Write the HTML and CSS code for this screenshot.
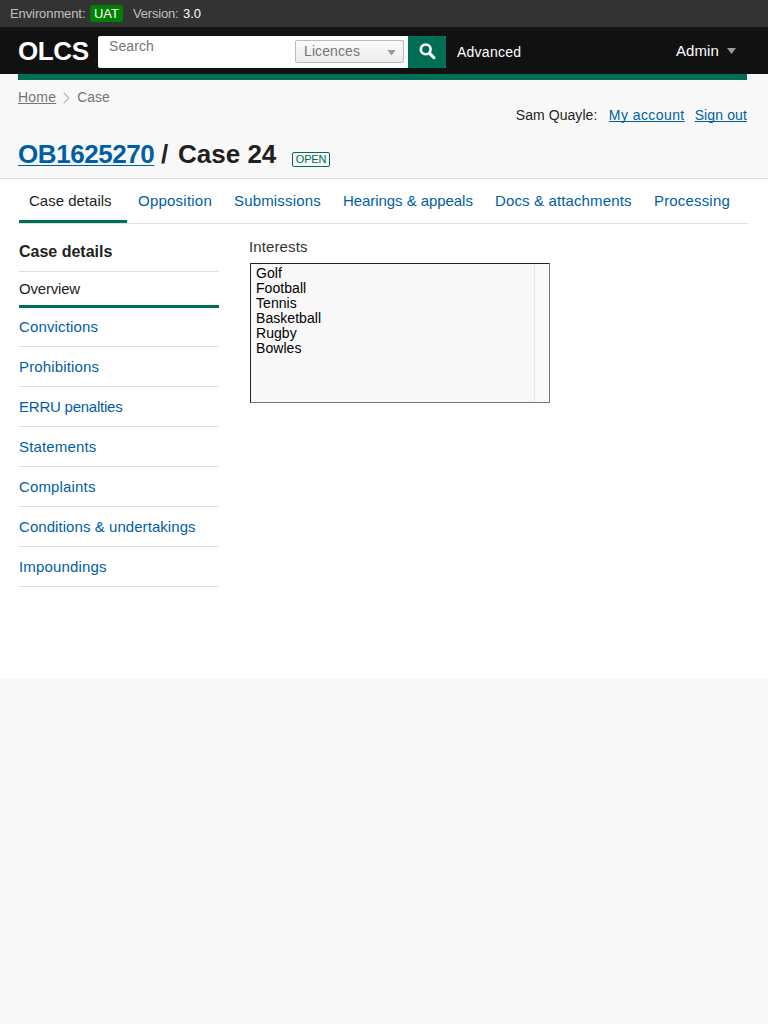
FILE: index.html
```html
<!DOCTYPE html>
<html lang="en">
<head>
<meta charset="utf-8">
<title>OLCS – Case 24</title>
<link rel="stylesheet" href="styles.css">
</head>
<body>
<div class="env"><span class="env-label">Environment:</span><span class="env-tag">UAT</span><span class="ver-label">Version:</span><span class="ver">3.0</span></div>
<header class="top">
  <span class="logo">OLCS</span>
  <form class="search">
    <span class="placeholder">Search</span>
    <span class="select"><span class="select-text">Licences</span><i class="arrow"></i></span>
    <span class="go"><svg width="17" height="17" viewBox="0 0 17 17"><circle cx="6.7" cy="6.4" r="4.9" fill="none" stroke="#fff" stroke-width="2.6"/><path d="M10.3 10.2 L14.9 14.6" stroke="#fff" stroke-width="3.1" stroke-linecap="round"/></svg></span>
  </form>
  <a class="advanced">Advanced</a>
  <span class="admin">Admin</span><i class="arrow"></i>
</header>
<div class="page-head">
  <div class="accent"></div>
  <div class="crumbs"><a class="home">Home</a><svg class="chev" width="7" height="12" viewBox="0 0 7 12"><path d="M0.7 0.7 L5.8 6 L0.7 11.3" fill="none" stroke="#b8bbbc" stroke-width="1.3"/></svg><span class="current">Case</span></div>
  <div class="account"><span class="user">Sam Quayle:</span><a class="my">My account</a><a class="out">Sign out</a></div>
  <div class="title"><h1><a class="ref">OB1625270</a><span class="slash">/</span><span class="case-no">Case 24</span></h1><span class="status"><span class="status-text">OPEN</span></span></div>
</div>
<main class="main">
  <nav class="tabs"><a class="tab active">Case details</a><a class="tab opposition">Opposition</a><a class="tab submissions">Submissions</a><a class="tab hearings">Hearings &amp; appeals</a><a class="tab docs">Docs &amp; attachments</a><a class="tab processing">Processing</a></nav>
  <div class="columns">
    <aside class="side">
      <h2>Case details</h2>
      <a class="item current-item">Overview</a>
      <a class="item first">Convictions</a>
      <a class="item">Prohibitions</a>
      <a class="item erru">ERRU penalties</a>
      <a class="item">Statements</a>
      <a class="item">Complaints</a>
      <a class="item conditions">Conditions &amp; undertakings</a>
      <a class="item">Impoundings</a>
    </aside>
    <section class="content">
      <div class="label">Interests</div>
      <div class="listbox"><div class="options"><div>Golf</div><div>Football</div><div>Tennis</div><div>Basketball</div><div>Rugby</div><div>Bowles</div></div><div class="track"></div></div>
    </section>
  </div>
</main>
</body>
</html>
```
FILE: styles.css
```css
* { box-sizing: border-box; }
body { margin: 0; background: #f8f8f8; color: #231f20; font-family: "Liberation Sans", Arial, sans-serif; font-size: 15px; line-height: 20px; white-space: nowrap; }
a { color: #005ea5; }
.env { height: 27px; background: #333; display: flex; align-items: center; padding-left: 10px; font-size: 13px; color: #bfc1c3; }
.env-label { width: 80px; letter-spacing: -0.1px; }
.env-tag { width: 33px; height: 17px; line-height: 17px; background: #008000; color: #fff; border-radius: 2px; text-align: center; margin-right: 10px; }
.ver-label { width: 50px; letter-spacing: -0.2px; }
.ver { color: #fff; }
.top { height: 47px; background: #111; display: flex; align-items: center; padding: 0 32px 0 18px; color: #fff; }
.logo { width: 80px; font-size: 26px; font-weight: bold; line-height: 30px; letter-spacing: -0.4px; }
.search { margin: 5px 11px 3px 0; width: 348px; height: 32px; display: flex; background: #fff; border-radius: 2px; }
.placeholder { width: 197px; padding-left: 11px; color: #6f777b; font-size: 14px; line-height: 21px; letter-spacing: 0.1px; }
.select { width: 109px; height: 23px; margin-top: 4px; border: 1px solid #bbb; border-radius: 2px; background: linear-gradient(#fafafa, #ececec); display: flex; align-items: center; justify-content: space-between; padding: 0 7px 0 8px; color: #777; font-size: 14px; letter-spacing: 0.1px; }
.arrow { width: 9px; height: 6px; background: #999; clip-path: polygon(0 0, 100% 0, 50% 100%); margin-top: 1px; }
.select .arrow { margin-top: 3px; }
.go { width: 38px; height: 32px; margin-left: 4px; background: #006d55; border-radius: 0 2px 2px 0; display: flex; align-items: center; justify-content: center; }
.go svg { margin-bottom: 1px; }
.advanced { color: #fff; font-size: 14px; padding-top: 2px; letter-spacing: 0.25px; }
.admin { margin-left: auto; margin-right: 8px; letter-spacing: 0.1px; }
.page-head { height: 105px; border-bottom: 1px solid #dcdedf; padding: 0 21px 0 18px; }
.accent { height: 6px; background: #006d55; }
.crumbs { height: 25px; padding-top: 9px; display: flex; align-items: center; font-size: 14px; color: #6f777b; }
.home { color: #6f777b; text-decoration: underline; margin-right: 7px; letter-spacing: 0.2px; }
.chev { margin: 2px 7px 0 0; }
.account { display: flex; justify-content: flex-end; font-size: 14px; }
.account a { text-decoration: underline; text-decoration-thickness: 1px; text-underline-offset: 1px; text-decoration-skip-ink: none; }
.user { width: 93px; letter-spacing: 0.05px; }
.my { letter-spacing: 0.42px; }
.out { margin-left: 10px; letter-spacing: 0.12px; }
.title { display: flex; margin-top: 14px; }
h1 { font-size: 26px; line-height: 30px; margin: 0; display: flex; }
.ref { text-decoration: underline; text-decoration-thickness: 1px; text-underline-offset: 2px; margin-right: 7px; width: 136px; letter-spacing: -0.43px; }
.slash { width: 17px; }
.case-no { width: 114px; }
.status { width: 38px; height: 15px; margin-top: 13px; border: 1px solid #006d55; border-radius: 2px; color: #006d55; font-size: 11px; line-height: 13px; text-align: center; letter-spacing: -0.2px; }
.main { height: 500px; background: #fff; padding: 0 20px 0 19px; }
.tabs { height: 45px; border-bottom: 1px solid #dcdedf; display: grid; grid-template-columns: 108px 96px 109px 152px 159px 1fr; }
.tab { padding: 12px 0 0 11px; height: 44px; }
.active { padding-left: 10px; color: #231f20; border-bottom: 3px solid #006d55; }
.opposition { letter-spacing: 0.23px; }
.submissions, .processing { letter-spacing: 0.17px; }
.hearings { letter-spacing: -0.06px; }
.docs { letter-spacing: 0.13px; }
.columns { display: flex; gap: 30px; }
.side { width: 200px; }
h2 { font-size: 16px; line-height: 20px; margin: 0; padding-top: 18px; height: 48px; border-bottom: 1px solid #dcdedf; }
.item { display: block; height: 40px; padding-top: 10px; border-bottom: 1px solid #dcdedf; letter-spacing: 0.15px; }
.current-item { height: 36px; padding-top: 7px; color: #231f20; border-bottom: 3px solid #006d55; letter-spacing: -0.2px; }
.first { height: 39px; padding-top: 9px; }
.erru { letter-spacing: -0.23px; }
.conditions { letter-spacing: 0.06px; }
.content { padding-top: 13px; }
.label { color: #333; letter-spacing: 0.12px; }
.listbox { width: 300px; height: 140px; margin: 6px 0 0 1px; border: 1px solid #777; border-top-color: #222; border-left-color: #222; background: #f8f8f8; display: flex; justify-content: space-between; color: #000; font-size: 14px; line-height: 15px; }
.options { padding: 2px 0 0 5px; letter-spacing: 0.05px; }
.track { width: 15px; border-left: 1px solid #e8e8e8; background: #fafafa; }
```
